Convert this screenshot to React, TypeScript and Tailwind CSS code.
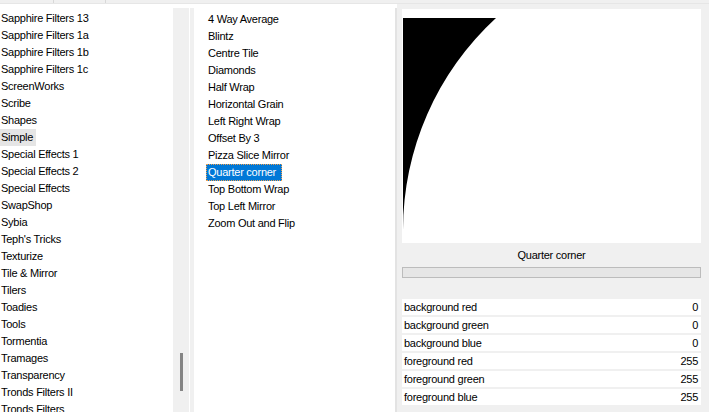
const categories = [
  "Sapphire Filters 13",
  "Sapphire Filters 1a",
  "Sapphire Filters 1b",
  "Sapphire Filters 1c",
  "ScreenWorks",
  "Scribe",
  "Shapes",
  "Simple",
  "Special Effects 1",
  "Special Effects 2",
  "Special Effects",
  "SwapShop",
  "Sybia",
  "Teph's Tricks",
  "Texturize",
  "Tile & Mirror",
  "Tilers",
  "Toadies",
  "Tools",
  "Tormentia",
  "Tramages",
  "Transparency",
  "Tronds Filters II",
  "Tronds Filters",
];

const filters = [
  "4 Way Average",
  "Blintz",
  "Centre Tile",
  "Diamonds",
  "Half Wrap",
  "Horizontal Grain",
  "Left Right Wrap",
  "Offset By 3",
  "Pizza Slice Mirror",
  "Quarter corner",
  "Top Bottom Wrap",
  "Top Left Mirror",
  "Zoom Out and Flip",
];

const params = [
  { name: "background red", value: 0 },
  { name: "background green", value: 0 },
  { name: "background blue", value: 0 },
  { name: "foreground red", value: 255 },
  { name: "foreground green", value: 255 },
  { name: "foreground blue", value: 255 },
];

export default function App() {
  return (
    <div
      className="flex h-[412px] w-[709px] flex-col overflow-hidden bg-white text-[11px] tracking-[-0.25px] text-black"
      style={{ fontFamily: '"Liberation Sans", Arial, sans-serif' }}
    >
      {/* top strip */}
      <div className="flex h-[4px] shrink-0 border-b border-[#e6e6e6] bg-[#f0f0f0]">
        <div className="w-[53px]" />
        <div className="w-[1px] bg-[#d8d8d8]" />
        <div className="w-[51px]" />
        <div className="w-[1px] bg-[#d8d8d8]" />
      </div>

      <div className="flex min-h-0 flex-1">
        {/* category list */}
        <div className="w-[173px] shrink-0 pt-[6px]">
          {categories.map((c) => (
            <div key={c} className="h-[17px] leading-[17px] whitespace-nowrap">
              <span className={c === "Simple" ? "inline-block bg-[#e5e5e5] pl-[1px] pr-[3px]" : "pl-[1px]"}>{c}</span>
            </div>
          ))}
        </div>

        {/* scrollbar */}
        <div className="mt-[4px] flex w-[16px] shrink-0 flex-col items-center bg-[#f0f0f0] pt-[345px]">
          <div className="ml-[1px] h-[38px] w-[3px] bg-[#858585]" />
        </div>
        <div className="w-[1px] shrink-0" />
        <div className="mt-[4px] w-[4px] shrink-0 bg-[#f0f0f0]" />

        {/* filter list */}
        <div className="w-[201px] shrink-0 pt-[7px] pl-[12px]">
          {filters.map((f) => (
            <div key={f} className="h-[17px] leading-[17px] whitespace-nowrap">
              {f === "Quarter corner" ? (
                <span className="inline-block h-[17px] bg-[#0078d7] pl-[2px] pr-[6px] text-white outline outline-1 outline-dotted outline-[#f0a050] -outline-offset-1">
                  {f}
                </span>
              ) : (
                <span className="pl-[2px]">{f}</span>
              )}
            </div>
          ))}
        </div>
        <div className="mt-[4px] w-[2px] shrink-0 bg-[#e3e3e3]" />

        {/* preview + parameters */}
        <div className="flex flex-1 flex-col bg-[#f0f0f0] pt-[5px] pl-[5px] pr-[8px]">
          <div className="h-[234px] w-[299px] bg-white">
            <svg width="299" height="234" viewBox="0 0 299 234">
              <path d="M1 9 L94 9 A288 288 0 0 0 1 221 Z" fill="#000" />
            </svg>
          </div>
          <div className="flex h-[24px] items-center justify-center">Quarter corner</div>
          <div className="h-[11px] w-[299px] border border-[#bcbcbc] bg-[#e6e6e6]" />
          <div className="h-[21px]" />
          <div className="flex w-[299px] flex-col">
            {params.map((p) => (
              <div key={p.name} className="mb-[2px] flex h-[16px] items-center justify-between bg-white pl-[2px] pr-[3px]">
                <span>{p.name}</span>
                <span>{p.value}</span>
              </div>
            ))}
          </div>
        </div>
      </div>
    </div>
  );
}
